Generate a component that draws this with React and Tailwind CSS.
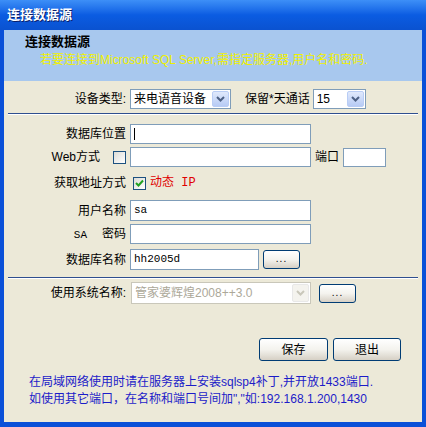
import React from "react";

const font = "font-['Liberation_Sans','Noto_Sans_CJK_SC',sans-serif]";
const mono = "font-['Liberation_Mono','Noto_Sans_CJK_SC',monospace]";

function Chevron({ color = "#4d6185" }) {
  return (
    <svg width="9" height="6" viewBox="0 0 9 6">
      <path d="M1 1 L4.5 4.5 L8 1" stroke={color} strokeWidth="2" fill="none" />
    </svg>
  );
}

function Select({ text, w, disabled }) {
  return (
    <div
      className={`flex items-stretch h-full bg-white border ${disabled ? "border-[#c9c7ba]" : "border-[#7f9db9]"} ${w}`}
    >
      <div className={`flex-1 flex items-center pl-[3px] text-[12px] ${disabled ? "text-[#aca899]" : "text-black"}`}>
        {text}
      </div>
      <div
        className={`w-[17px] m-[1px] flex items-center justify-center rounded-[2px] border ${
          disabled
            ? "border-[#e8e8e8] bg-[#f4f3ee]"
            : "border-[#b9cdf5] bg-gradient-to-b from-[#e0e9fc] to-[#b7cbf5]"
        }`}
      >
        <Chevron color={disabled ? "#c9c7ba" : "#4d6185"} />
      </div>
    </div>
  );
}

function Input({ w, children, cls = "" }) {
  return (
    <div className={`h-full bg-white border border-[#7f9db9] flex items-center pl-[3px] ${w} ${cls}`}>
      {children}
    </div>
  );
}

function XPButton({ w, h, children, cls = "" }) {
  return (
    <div
      className={`flex items-center justify-center rounded-[3px] border border-[#003c74] bg-gradient-to-b from-[#ffffff] via-[#f4f3ee] to-[#d6d0c5] text-[12px] text-black ${w} ${h} ${cls}`}
    >
      {children}
    </div>
  );
}

function Label({ w = "w-[122px]", children }) {
  return <div className={`${w} text-right text-[12px] leading-[14px] text-black whitespace-nowrap`}>{children}</div>;
}

export default function App() {
  return (
    <div className={`w-[426px] h-[427px] flex flex-col bg-[#0a50d8] ${font}`}>
      <div className="h-[30px] flex items-center pl-[7px] bg-gradient-to-b from-[#3d8ff7] via-[#0b5ce2] to-[#0a52d0]">
        <span className="text-white font-bold text-[13px] leading-[16px] [text-shadow:1px_1px_0_#0a1f6a]">连接数据源</span>
      </div>
      <div className="flex-1 mx-[4px] mb-[5px] bg-[#ece9d8] flex flex-col">
        <div className="h-[51px] bg-[#a8c8ee] pl-[21px] pt-[4px]">
          <div className="font-bold text-[13px] leading-[16px] text-black">连接数据源</div>
          <div className="mt-[2px] pl-[15px] text-[12px] leading-[16px] text-[#f0f000] whitespace-nowrap">
            若要连接到Microsoft SQL Server,需指定服务器,用户名和密码.
          </div>
        </div>

        <div className="mt-[8px] h-[20px] flex items-center">
          <Label>设备类型:</Label>
          <div className="ml-[4px] h-full">
            <Select text="来电语音设备" w="w-[101px]" />
          </div>
          <div className="ml-[14px] text-[12px] whitespace-nowrap">保留*天通话</div>
          <div className="ml-[3px] h-full">
            <Select text="15" w="w-[53px]" />
          </div>
        </div>

        <div className="mt-[4px] mx-[4px] h-[2px] bg-[#2f4f8f] border-b border-white"></div>

        <div className="mt-[9px] h-[20px] flex items-center">
          <Label>数据库位置</Label>
          <div className="ml-[4px] h-full">
            <Input w="w-[181px]">
              <div className="w-[1px] h-[12px] bg-black"></div>
            </Input>
          </div>
        </div>

        <div className="mt-[3px] h-[20px] flex items-center">
          <Label w="w-[96px]">Web方式</Label>
          <div className="ml-[13px] w-[13px] h-[13px] border border-[#1c5180] bg-gradient-to-br from-[#dcdcd7] to-white"></div>
          <div className="ml-[4px] h-full">
            <Input w="w-[181px]" />
          </div>
          <div className="ml-[4px] text-[12px]">端口</div>
          <div className="ml-[4px] h-[19px]">
            <Input w="w-[43px]" />
          </div>
        </div>

        <div className="mt-[6px] h-[20px] flex items-center">
          <Label>获取地址方式</Label>
          <div className="ml-[7px] w-[13px] h-[13px] border border-[#1c5180] bg-gradient-to-br from-[#dcdcd7] to-white flex items-center justify-center">
            <svg width="9" height="9" viewBox="0 0 9 9">
              <path d="M1 4 L3.5 6.5 L8 1.5" stroke="#21a121" strokeWidth="2" fill="none" />
            </svg>
          </div>
          <div className={`ml-[4px] text-[12px] text-[#e00000] ${mono}`}>动态 IP</div>
        </div>

        <div className="mt-[7px] h-[21px] flex items-center">
          <Label>用户名称</Label>
          <div className="ml-[4px] h-full">
            <Input w="w-[181px]">
              <span className={`text-[11px] ${mono}`}>sa</span>
            </Input>
          </div>
        </div>

        <div className="mt-[3px] h-[20px] flex items-center">
          <Label>
            <span className={`text-[11px] ${mono}`}>SA</span>
            <span className="ml-[15px]">密码</span>
          </Label>
          <div className="ml-[4px] h-full">
            <Input w="w-[181px]" />
          </div>
        </div>

        <div className="mt-[5px] h-[21px] flex items-center">
          <Label>数据库名称</Label>
          <div className="ml-[4px] h-full">
            <Input w="w-[129px]">
              <span className={`text-[11px] ${mono}`}>hh2005d</span>
            </Input>
          </div>
          <XPButton w="w-[37px]" h="h-[19px]" cls="ml-[4px]">
            <span className="text-[10px] tracking-[1px] -mt-[2px]">...</span>
          </XPButton>
        </div>

        <div className="mt-[7px] mx-[4px] h-[2px] bg-[#2f4f8f] border-b border-white"></div>

        <div className="mt-[3px] h-[22px] flex items-center">
          <Label>使用系统名称:</Label>
          <div className="ml-[5px] h-full">
            <Select text="管家婆辉煌2008++3.0" w="w-[180px]" disabled />
          </div>
          <XPButton w="w-[37px]" h="h-[19px]" cls="ml-[8px]">
            <span className="text-[10px] tracking-[1px] -mt-[2px]">...</span>
          </XPButton>
        </div>

        <div className="mt-[34px] h-[23px] flex justify-end gap-[5px] mr-[21px]">
          <XPButton w="w-[69px]" h="h-[23px]">保存</XPButton>
          <XPButton w="w-[68px]" h="h-[23px]">退出</XPButton>
        </div>

        <div className="mt-[13px] pl-[25px] text-[12px] leading-[17px] text-[#1c1cc8] whitespace-nowrap">
          <div>在局域网络使用时请在服务器上安装sqlsp4补丁,并开放1433端口.</div>
          <div>{'如使用其它端口，在名称和端口号间加","如:192.168.1.200,1430'}</div>
        </div>
      </div>
    </div>
  );
}
